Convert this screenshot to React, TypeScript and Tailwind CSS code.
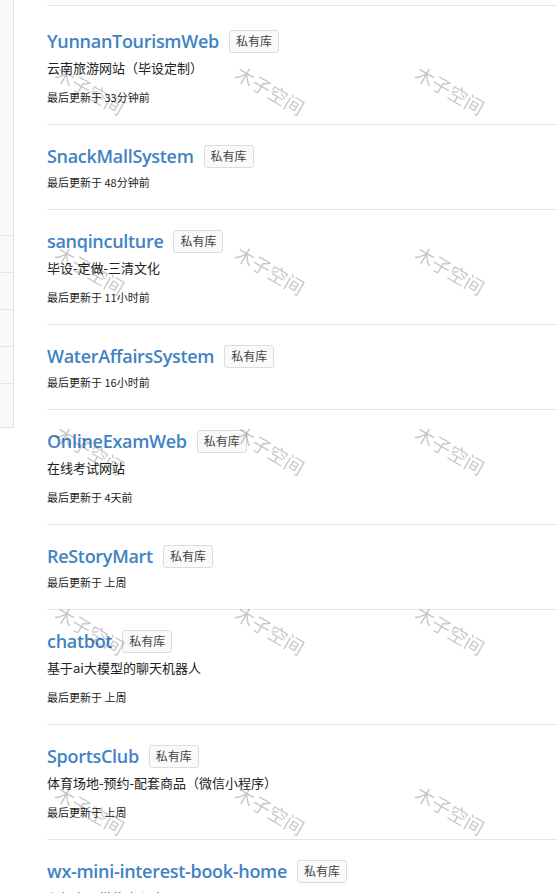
import React from 'react'

type Repo = {
  name: string
  desc?: string
  updated: string
}

const repos: Repo[] = [
  { name: 'YunnanTourismWeb', desc: '云南旅游网站（毕设定制）', updated: '33分钟前' },
  { name: 'SnackMallSystem', updated: '48分钟前' },
  { name: 'sanqinculture', desc: '毕设-定做-三清文化', updated: '11小时前' },
  { name: 'WaterAffairsSystem', updated: '16小时前' },
  { name: 'OnlineExamWeb', desc: '在线考试网站', updated: '4天前' },
  { name: 'ReStoryMart', updated: '上周' },
  { name: 'chatbot', desc: '基于ai大模型的聊天机器人', updated: '上周' },
  { name: 'SportsClub', desc: '体育场地-预约-配套商品（微信小程序）', updated: '上周' },
  { name: 'wx-mini-interest-book-home', desc: '兴趣书屋微信小程序', updated: '上周' },
]

const cjk = "font-['Noto_Sans_CJK_SC','Noto_Sans',sans-serif]"

function RepoItem({ repo, first }: { repo: Repo; first: boolean }) {
  return (
    <li className={`border-t border-[#e5e5e5] pb-[18px] ${first ? 'pt-[23px]' : 'pt-[19px]'}`}>
      <div className="flex items-center h-6 gap-[10px]">
        <a className="text-[18px] leading-6 font-semibold text-[#4183c4] font-['Open_Sans',sans-serif] tracking-[-0.3px]">
          {repo.name}
        </a>
        <span className={`h-[23px] w-[50px] flex items-center justify-center border border-[#dcdcdc] bg-[#fafafa] rounded-[3px] text-[12px] text-[#444] ${cjk}`}>
          私有库
        </span>
      </div>
      {repo.desc && (
        <p className={`mt-[5px] text-[13px] leading-5 text-[#222] ${cjk}`}>{repo.desc}</p>
      )}
      <p className={`${repo.desc ? 'mt-[10px]' : 'mt-[5px]'} text-[11px] leading-[18px] text-[#222] ${cjk}`}>
        最后更新于 {repo.updated}
      </p>
    </li>
  )
}

function Watermarks() {
  const cells = Array.from({ length: 15 })
  return (
    <div className="pointer-events-none fixed inset-0 z-10 overflow-hidden">
      <div className="grid grid-cols-[repeat(3,180px)] auto-rows-[180px]">
        {cells.map((_, i) => (
          <div key={i} className="flex items-center justify-center">
            <span className={`rotate-[30deg] text-[19px] font-normal text-[rgba(0,0,0,0.22)] whitespace-nowrap ${cjk}`}>
              木子空间
            </span>
          </div>
        ))}
      </div>
    </div>
  )
}

export default function App() {
  return (
    <div className="relative min-h-[893px] bg-white overflow-hidden">
      <div className="flex items-start">
        <aside className="w-[14px] shrink-0 bg-[#f9f9f9] border-r border-b border-[#e3e3e3]">
          <div className="h-[235px]" />
          <div className="h-[37px] border-t border-[#e6e6e6]" />
          <div className="h-[37px] border-t border-[#e6e6e6]" />
          <div className="h-[37px] border-t border-[#e6e6e6]" />
          <div className="h-[37px] border-t border-[#e6e6e6]" />
          <div className="h-[44px] border-t border-[#e6e6e6]" />
        </aside>
        <main className="flex-1 ml-[33px] pt-[5px]">
          <ul>
            {repos.map((r, i) => (
              <RepoItem key={r.name} repo={r} first={i === 0} />
            ))}
          </ul>
        </main>
      </div>
      <Watermarks />
    </div>
  )
}
